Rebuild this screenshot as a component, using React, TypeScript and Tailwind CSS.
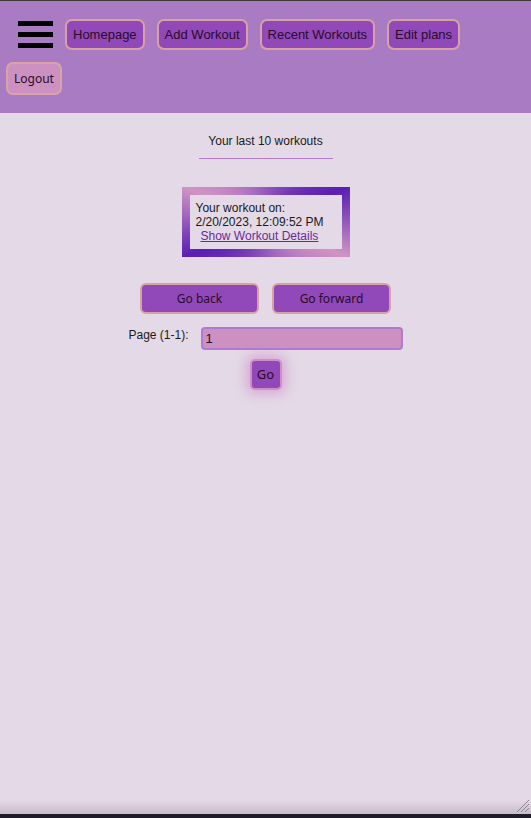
const navLinks = ["Homepage", "Add Workout", "Recent Workouts", "Edit plans"];

const sans = "font-['Liberation_Sans',Arial,sans-serif]";
const btnFont = "font-['Noto_Sans',sans-serif]";

const Header = () => {
  return (
    <header className="bg-[#a97bc3] border-t border-[#3a3a3a] pt-[12px] pb-[12px] flex flex-wrap items-center">
      {/* hamburger */}
      <div className="ml-[18px] mr-[6px] my-[6px] w-[35px] h-[31px] flex flex-col justify-center gap-[6px]">
        <span className="block h-[5px] bg-black" />
        <span className="block h-[5px] bg-black" />
        <span className="block h-[5px] bg-black" />
      </div>
      {navLinks.map((link, i) => (
        <button
          key={i}
          className={`${sans} m-[6px] h-[31px] px-[6px] border-2 border-[#d6a2a4] rounded-[7px] bg-[#9148b8] text-[13px] text-[#2b0b2b]`}
        >
          {link}
        </button>
      ))}
      <button
        className={`${btnFont} m-[6px] h-[33px] px-[6px] border-2 border-[#d9a4a8] rounded-[7px] bg-[#cc91c1] text-[12px] text-[#2b0b2b]`}
      >
        Logout
      </button>
    </header>
  );
};

const WorkoutCard = () => {
  return (
    <div className="mt-[28px] p-[8px] bg-[conic-gradient(from_0deg,#9458bd,#5a1fb2_67deg,#cf93c4_113deg,#5a1fb2_247deg,#cf93c4_293deg,#9458bd)]">
      <div className={`${sans} w-[152px] h-[54px] bg-[#e4d9e6] px-[6px] py-[6px] text-[12px] leading-[14px] text-[#1a1a1a]`}>
        <div>Your workout on:</div>
        <div>2/20/2023, 12:09:52 PM</div>
        <a href="#" className="ml-[5px] text-[#6a2a9a] underline">
          Show Workout Details
        </a>
      </div>
    </div>
  );
};

const App = () => {
  return (
    <div className="h-[818px] flex flex-col bg-[#e4d9e6] relative overflow-hidden">
      <Header />

      <main className="flex-1 flex flex-col items-center pt-[21px]">
        <h2 className={`${sans} text-[12px] leading-[14px] text-[#1a1a1a]`}>Your last 10 workouts</h2>
        <div className="mt-[10px] w-[134px] h-[1px] bg-[#b47ad0]" />

        <WorkoutCard />

        <div className="mt-[26px] flex gap-[13px]">
          <button className={`${btnFont} w-[119px] h-[31px] border-2 border-[#d6a2a4] rounded-[6px] bg-[#9148b8] text-[12px] text-[#2b0b2b]`}>
            Go back
          </button>
          <button className={`${btnFont} w-[119px] h-[31px] border-2 border-[#d6a2a4] rounded-[6px] bg-[#9148b8] text-[12px] text-[#2b0b2b]`}>
            Go forward
          </button>
        </div>

        <div className="mt-[13px] flex items-start gap-[12px]">
          <label className={`${sans} text-[12px] leading-[14px] pt-[1px] text-[#1a1a1a]`}>Page (1-1):</label>
          <input
            defaultValue="1"
            className={`${sans} w-[202px] h-[23px] border-2 border-[#b07ad0] rounded-[4px] bg-[#cc91c1] px-[3px] text-[13px] text-[#2b0b2b] outline-none`}
          />
        </div>

        <button className={`${btnFont} mt-[9px] w-[32px] h-[31px] border-2 border-[#cf8fc6] rounded-[5px] bg-[#9148b8] text-[13px] text-[#2b0b2b] shadow-[0_0_12px_4px_rgba(204,130,200,0.55)]`}>
          Go
        </button>
      </main>

      <div className="h-[14px] bg-gradient-to-b from-[#e4d9e6] to-[#c8bccb]" />
      <div className="h-[4px] bg-[#1e1c28]" />

      {/* resize grip */}
      <svg className="absolute right-[1px] bottom-[5px]" width="14" height="14" viewBox="0 0 14 14">
        <path d="M13 1 L1 13 M13 5 L5 13 M13 9 L9 13" stroke="#8a8590" strokeWidth="1" />
      </svg>
    </div>
  );
};

export default App;
